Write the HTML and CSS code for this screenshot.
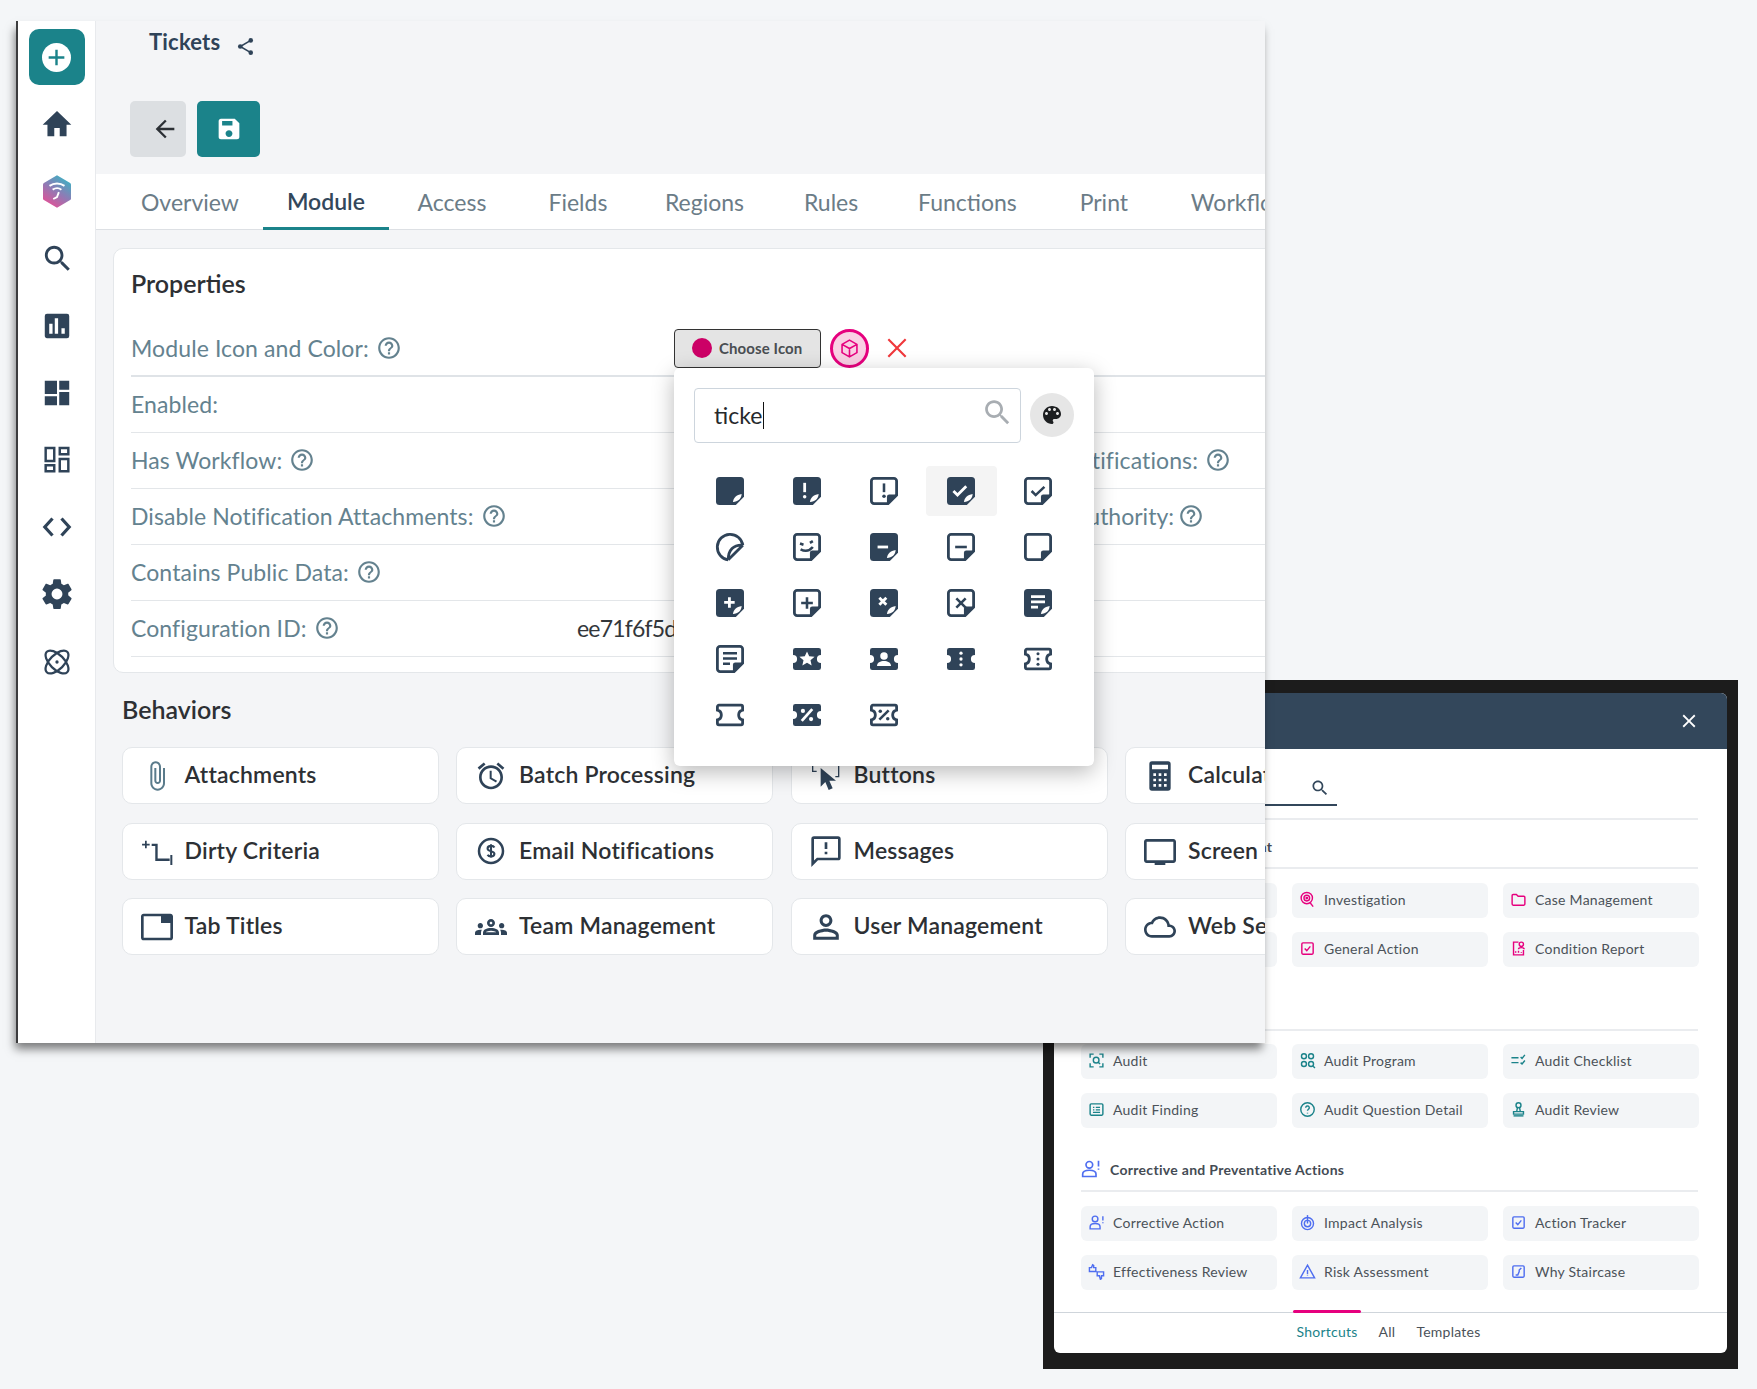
FILE: index.html
```html
<!DOCTYPE html>
<html lang="en">
<head>
    <meta charset="UTF-8">
    <meta name="viewport" content="width=device-width, initial-scale=1.0">
    <title>Tickets</title>
    <link rel="stylesheet" href="styles.css">
</head>
<body>
    <svg class="sprite" width="0" height="0">
        <defs>
            <linearGradient id="hexGrad" x1="0.8" y1="0" x2="0.2" y2="1">
                <stop offset="0" stop-color="#35b6c4"/>
                <stop offset="0.5" stop-color="#8f7bb5"/>
                <stop offset="1" stop-color="#ea4d94"/>
            </linearGradient>

            <symbol id="help" viewBox="0 0 24 24"><path d="M11 18h2v-2h-2v2zm1-16C6.48 2 2 6.48 2 12s4.48 10 10 10 10-4.48 10-10S17.52 2 12 2zm0 18c-4.41 0-8-3.59-8-8s3.59-8 8-8 8 3.59 8 8-3.59 8-8 8zm0-14c-2.21 0-4 1.79-4 4h2c0-1.1.9-2 2-2s2 .9 2 2c0 2-3 1.75-3 5h2c0-2.25 3-2.5 3-5 0-2.21-1.79-4-4-4z"/></symbol>

            <!-- sticky notes and tickets for the picker -->
            <symbol id="nf" viewBox="0 0 24 24"><path d="M3 0h18a3 3 0 0 1 3 3v14l-7 7H3a3 3 0 0 1-3-3V3a3 3 0 0 1 3-3z"/><path class="w" d="M14.500 21.500c.3-3.600 3-6.300 7.500-7-.3 4-3 6.600-7.500 7z"/></symbol>
            <symbol id="nl" viewBox="0 0 24 24"><path class="ln" d="M3.500 1.200h17a2.300 2.300 0 0 1 2.300 2.300v12l-7.300 7.300h-12a2.300 2.300 0 0 1-2.300-2.300v-17a2.300 2.300 0 0 1 2.300-2.300z"/><path d="M14.500 23.500V17a2 2 0 0 1 2-2h7z"/></symbol>
            <symbol id="tf" viewBox="0 0 24 24"><path d="M2 2.500h20a2 2 0 0 1 2 2v4a3.500 3.500 0 0 0 0 7v4a2 2 0 0 1-2 2H2a2 2 0 0 1-2-2v-4a3.500 3.500 0 0 0 0-7v-4a2 2 0 0 1 2-2z"/></symbol>
            <symbol id="tl" viewBox="0 0 24 24"><path class="ln" d="M2.500 3.600h19a1.300 1.300 0 0 1 1.300 1.300v2.900a4.300 4.300 0 0 0 0 8.400v2.900a1.300 1.300 0 0 1-1.300 1.300h-19a1.300 1.300 0 0 1-1.300-1.300v-2.900a4.300 4.300 0 0 0 0-8.400V4.900a1.300 1.300 0 0 1 1.300-1.300z"/></symbol>
        </defs>
    </svg>

    <!-- window behind -->
    <section class="back-window">
        <div class="panel">
            <div class="panel-head">
                <svg class="panel-close" viewBox="0 0 24 24"><path d="M19 6.410L17.590 5 12 10.590 6.410 5 5 6.410 10.590 12 5 17.590 6.410 19 12 13.410 17.590 19 19 17.590 13.410 12z"/></svg>
            </div>
            <div class="panel-body">
                <div class="panel-search">
                    <svg viewBox="0 0 24 24"><path d="M15.500 14h-.790l-.280-.270C15.410 12.590 16 11.110 16 9.500 16 5.910 13.090 3 9.500 3S3 5.910 3 9.500 5.910 16 9.500 16c1.610 0 3.090-.590 4.230-1.570l.270.280v.790l5 4.990L20.490 19l-4.990-5zm-6 0C7.010 14 5 11.990 5 9.500S7.010 5 9.500 5 14 7.010 14 9.500 11.990 14 9.500 14z"/></svg>
                </div>

                <div class="section-head first pink"><svg viewBox="0 0 24 24"><path d="M3 6.500a1.500 1.500 0 0 1 1.500-1.500H9l2.500 2.500h8A1.500 1.500 0 0 1 21 9v9.500a1.500 1.500 0 0 1-1.500 1.500h-15A1.500 1.500 0 0 1 3 18.500z"/></svg>Client Case Management</div>
                <div class="items pink">
                    <div class="item">Incident</div>
                    <div class="item"><svg viewBox="0 0 24 24"><circle cx="11" cy="10" r="8"/><circle cx="11" cy="10" r="4"/><circle cx="11" cy="10" r="1"/><path d="M16 17l4 5"/></svg>Investigation</div>
                    <div class="item"><svg viewBox="0 0 24 24"><path d="M3 6.500a1.500 1.500 0 0 1 1.500-1.500H9l2.500 2.500h8A1.500 1.500 0 0 1 21 9v9.500a1.500 1.500 0 0 1-1.500 1.500h-15A1.500 1.500 0 0 1 3 18.500z"/></svg>Case Management</div>
                    <div class="item">Hazard</div>
                    <div class="item"><svg viewBox="0 0 24 24"><rect x="4" y="4" width="16" height="16" rx="1.500"/><path d="M8 12l3 3 5-6"/></svg>General Action</div>
                    <div class="item"><svg viewBox="0 0 24 24"><path d="M12 3H5v18h14v-7"/><circle cx="16" cy="6" r="3"/><path d="M12 13c0-3 8-3 8 0M8 18v-2M12 18v-3M16 18v-1"/></svg>Condition Report</div>
                </div>

                <div class="section-head">Audit</div>
                <div class="items teal">
                    <div class="item"><svg viewBox="0 0 24 24"><path d="M8 3H3v5M16 3h5v5M8 21H3v-5M16 21h5v-5"/><circle cx="11.500" cy="11.500" r="4"/><path d="M14.500 14.500l2.500 2.500"/></svg>Audit</div>
                    <div class="item"><svg viewBox="0 0 24 24"><circle cx="7" cy="6" r="3.500"/><circle cx="17" cy="6" r="3.500"/><circle cx="7" cy="17" r="3.500"/><circle cx="17" cy="17" r="3.500"/><path d="M20 20l2.500 2.500"/></svg>Audit Program</div>
                    <div class="item"><svg viewBox="0 0 24 24"><path d="M2 8h10M2 15h10M15 7l2 2 4-5M15 15l2 2 4-5"/></svg>Audit Checklist</div>
                    <div class="item"><svg viewBox="0 0 24 24"><rect x="3" y="4" width="18" height="16" rx="1.500"/><path d="M7 9h2M11 9h6M7 12.500h2M11 12.500h6M7 16h10"/></svg>Audit Finding</div>
                    <div class="item"><svg viewBox="0 0 24 24"><circle cx="12" cy="12" r="9.500"/><path d="M9.500 9.500a2.500 2.500 0 1 1 3.800 2.100c-.9.600-1.300 1.100-1.300 2.200M12 16.500v1"/></svg>Audit Question Detail</div>
                    <div class="item"><svg viewBox="0 0 24 24"><circle cx="12" cy="6" r="3.500"/><path d="M10.500 9.500l-1 5M13.500 9.500l1 5M5 15h14v3.500H5z"/><path class="solid" d="M5 20h14v2H5z"/></svg>Audit Review</div>
                </div>

                <div class="section-head"><svg viewBox="0 0 24 24"><circle cx="10" cy="7" r="4"/><path d="M2 21v-3c0-3 4-4.500 8-4.500s8 1.500 8 4.500v3z"/><path d="M21 2v7M21 11.500v1.500"/></svg>Corrective and Preventative Actions</div>
                <div class="items blue">
                    <div class="item"><svg viewBox="0 0 24 24"><circle cx="10" cy="7" r="4"/><path d="M3 21v-3c0-3 3.500-4.500 7-4.500s7 1.500 7 4.500v3z"/><path d="M21 3v6M21 11.500V13"/></svg>Corrective Action</div>
                    <div class="item"><svg viewBox="0 0 24 24"><circle cx="12" cy="13.500" r="8.500"/><circle cx="12" cy="13.500" r="4.500"/><path d="M12 1.500v12"/></svg>Impact Analysis</div>
                    <div class="item"><svg viewBox="0 0 24 24"><rect x="4" y="4" width="16" height="16" rx="1.500"/><path d="M8 12l3 3 5-6"/></svg>Action Tracker</div>
                    <div class="item"><svg viewBox="0 0 24 24"><path d="M2 6.500h3L6.500 2.500l1.500 1v3h3v5.500H2zM13 12.500h9v5.500h-3v4l-1.500 1L16 18h-3z"/></svg>Effectiveness Review</div>
                    <div class="item"><svg viewBox="0 0 24 24"><path d="M12 3l10 18H2zM12 10v6M12 17.500v1"/></svg>Risk Assessment</div>
                    <div class="item"><svg viewBox="0 0 24 24"><rect x="4" y="4" width="16" height="16" rx="1.500"/><path d="M8 17h3l2-5v-2l3-3"/></svg>Why Staircase</div>
                </div>
            </div>
            <nav class="panel-tabs">
                <span class="panel-tab active">Shortcuts</span>
                <span class="panel-tab">All</span>
                <span class="panel-tab">Templates</span>
            </nav>
        </div>
    </section>

    <!-- window in front -->
    <section class="main-window">
        <aside class="sidebar">
            <button class="add-btn">
                <svg viewBox="0 0 24 24"><circle cx="12" cy="12" r="12" fill="#fff"/><path d="M12 5.500v13M5.500 12h13" stroke="#1b838a" stroke-width="2" fill="none"/></svg>
            </button>
            <svg class="side-icon" viewBox="1 1 22 22"><path d="M10 21v-6h4v6h5v-8.500h3.500L12 2.500 1.500 12.500H5V21z"/></svg>
            <svg class="side-icon logo" viewBox="0 0 24 26"><path fill="url(#hexGrad)" d="M12 0l10.500 6.200a1.500 1.500 0 0 1 .7 1.300v11a1.500 1.500 0 0 1-.7 1.300L12 26 1.500 19.800a1.500 1.500 0 0 1-.7-1.300v-11a1.500 1.500 0 0 1 .7-1.300z"/><path d="M6 8.500c3.500-2.500 8.500-2.500 12 0M8.500 11.500c2.300-1.500 5-1.500 7 0M13.500 13.500l-1.500 4-3 1.500" fill="none" stroke="#fff" stroke-width="1.500"/></svg>
            <svg class="side-icon" viewBox="1 1 21 21"><path d="M15.500 14h-.790l-.280-.270C15.410 12.590 16 11.110 16 9.500 16 5.910 13.090 3 9.500 3S3 5.910 3 9.500 5.910 16 9.500 16c1.610 0 3.090-.590 4.230-1.570l.270.280v.790l5 4.990L20.490 19l-4.990-5zm-6 0C7.010 14 5 11.990 5 9.500S7.010 5 9.500 5 14 7.010 14 9.500 11.990 14 9.500 14z"/></svg>
            <svg class="side-icon" viewBox="-1.500 -1.500 27 27"><path d="M21 1H3a2 2 0 0 0-2 2v18c0 1.100.9 2 2 2h18a2 2 0 0 0 2-2V3a2 2 0 0 0-2-2zM8 19H5v-9h3v9zm5 0h-3V5h3v14zm6 0h-3v-5h3v5z"/></svg>
            <svg class="side-icon" viewBox="-1.500 -1.500 27 27"><path d="M1 13h11V1H1v12zm0 10h11v-8H1v8zm13 0h9V11h-9v12zM14 1v8h9V1h-9z"/></svg>
            <svg class="side-icon" viewBox="0.500 0 24.500 24.500"><path d="M21 3.500v3h-5v-3h5M9.500 3.500v8.500h-5V3.500h5M21 12.500v8h-5v-8h5M9.500 17.500v3h-5v-3h5M23 1.500h-9v7h9v-7zM11.500 1.500h-9V14h9V1.500zM23 10.500h-9v12h9v-12zM11.500 15.500h-9v7h9v-7z"/></svg>
            <svg class="side-icon" viewBox="0 0 30 30"><path d="M10.500 6.500L2.800 15l7.700 8.500M19.500 6.500L27.200 15l-7.700 8.500" fill="none" stroke="currentColor" stroke-width="3.200"/></svg>
            <svg class="side-icon" viewBox="1 1 22 22"><path d="M20.200 13c.040-.330.070-.660.070-1s-.030-.670-.080-1l2.320-1.800c.200-.160.260-.450.130-.680l-2.200-3.800c-.130-.240-.420-.320-.670-.240l-2.730 1.100c-.570-.430-1.180-.800-1.850-1.080l-.410-2.900c-.050-.270-.270-.470-.550-.470H9.840c-.270 0-.490.200-.540.470l-.410 2.900c-.670.280-1.290.650-1.850 1.080l-2.730-1.100c-.250-.090-.540 0-.670.240L1.440 8.520c-.140.240-.090.530.130.680L3.890 11c-.050.340-.100.720-.100 1.070s.020.730.080 1.070l-2.320 1.800c-.200.160-.260.450-.130.680l2.200 3.800c.130.240.420.320.670.240l2.730-1.100c.570.430 1.180.800 1.850 1.080l.410 2.900c.060.270.270.470.550.470h4.390c.270 0 .500-.200.540-.470l.410-2.900c.670-.280 1.290-.640 1.850-1.080l2.730 1.100c.250.090.540 0 .670-.240l2.200-3.800c.130-.240.080-.530-.130-.680zM12 16a4 4 0 1 1 0-8 4 4 0 0 1 0 8z"/></svg>
            <svg class="side-icon" viewBox="-1.500 -1.500 27 27"><g fill="none" stroke="currentColor" stroke-width="2"><ellipse cx="12" cy="12" rx="13" ry="6.500" transform="rotate(45 12 12)"/><ellipse cx="12" cy="12" rx="13" ry="6.500" transform="rotate(-45 12 12)"/></g><circle cx="12" cy="12" r="1.500"/></svg>
        </aside>

        <main class="content">
            <div class="page-title">
                <h1>Tickets</h1>
                <svg viewBox="0 0 24 24"><g fill="none" stroke="currentColor" stroke-width="1.800"><path d="M18 5L6 12l12 7"/></g><circle cx="18" cy="5" r="2.600"/><circle cx="6" cy="12" r="2.600"/><circle cx="18" cy="19" r="2.600"/></svg>
            </div>

            <div class="toolbar">
                <button class="btn-back"><svg viewBox="0 0 24 24"><path d="M20 11H7.830l5.590-5.590L12 4l-8 8 8 8 1.410-1.410L7.830 13H20v-2z"/></svg></button>
                <button class="btn-save"><svg viewBox="0 0 24 24"><path d="M17 3H5c-1.110 0-2 .9-2 2v14c0 1.100.89 2 2 2h14c1.100 0 2-.9 2-2V7l-4-4zm-5 16c-1.660 0-3-1.340-3-3s1.340-3 3-3 3 1.340 3 3-1.340 3-3 3zm3-10H6V5h9v4z" transform="translate(12 12) scale(.92) translate(-12 -12)"/></svg></button>
            </div>

            <nav class="tabs">
                <a class="tab">Overview</a>
                <a class="tab active">Module</a>
                <a class="tab">Access</a>
                <a class="tab">Fields</a>
                <a class="tab">Regions</a>
                <a class="tab">Rules</a>
                <a class="tab">Functions</a>
                <a class="tab">Print</a>
                <a class="tab">Workflow</a>
            </nav>

            <div class="card">
                <h2 class="card-title">Properties</h2>

                <div class="row strong">
                    <div class="label">Module Icon and Color: <svg class="help"><use href="#help"/></svg></div>
                    <div class="value">
                        <div class="picker">
                            <button class="choose-btn"><span class="dot"></span>Choose Icon</button>
                            <span class="preview"><svg viewBox="0 0 24 24"><path d="M12 2.500l8.500 4.800v9.400L12 21.500l-8.500-4.800V7.300zM3.500 7.300L12 12l8.500-4.700M12 12v9.500"/></svg></span>
                            <svg class="clear" viewBox="0 0 24 24"><path d="M4 4l16 16M20 4L4 20"/></svg>

                            <div class="popup">
                                <div class="popup-top">
                                    <div class="search-box">
                                        <span class="search-text">ticke</span>
                                        <svg viewBox="0 0 24 24"><path d="M15.500 14h-.790l-.280-.270C15.410 12.590 16 11.110 16 9.500 16 5.910 13.090 3 9.500 3S3 5.910 3 9.500 5.910 16 9.500 16c1.610 0 3.090-.590 4.230-1.570l.270.280v.790l5 4.990L20.490 19l-4.990-5zm-6 0C7.010 14 5 11.990 5 9.500S7.010 5 9.500 5 14 7.010 14 9.500 11.990 14 9.500 14z"/></svg>
                                    </div>
                                    <span class="palette"><svg viewBox="0 0 24 24"><path d="M12 3c-4.970 0-9 4.030-9 9s4.030 9 9 9c.83 0 1.500-.67 1.500-1.500 0-.39-.15-.74-.39-1.010-.23-.26-.38-.61-.38-.99 0-.83.67-1.500 1.500-1.500H16c2.760 0 5-2.240 5-5 0-4.420-4.030-8-9-8zm-5.500 9c-.83 0-1.500-.67-1.500-1.500S5.670 9 6.500 9 8 9.670 8 10.500 7.330 12 6.500 12zm3-4C8.670 8 8 7.330 8 6.500S8.670 5 9.500 5s1.500.67 1.500 1.500S10.330 8 9.500 8zm5 0c-.83 0-1.500-.67-1.500-1.500S13.670 5 14.500 5s1.500.67 1.500 1.500S15.330 8 14.500 8zm3 4c-.83 0-1.500-.67-1.500-1.500S16.670 9 17.500 9s1.500.67 1.500 1.500-.67 1.500-1.500 1.500z"/></svg></span>
                                </div>
                                <div class="icon-grid">
                                    <span class="cell"><svg viewBox="0 0 24 24"><use href="#nf"/></svg></span>
                                    <span class="cell"><svg viewBox="0 0 24 24"><use href="#nf"/><path class="w-s" d="M10 5v8"/><circle class="w" cx="10" cy="17" r="1.500"/></svg></span>
                                    <span class="cell"><svg viewBox="0 0 24 24"><use href="#nl"/><path class="d-s" d="M12 5.500v7.500"/><circle cx="12" cy="16.500" r="1.500"/></svg></span>
                                    <span class="cell picked"><svg viewBox="0 0 24 24"><use href="#nf"/><path class="w-s" d="M5.500 12l3.500 3.500 7.500-7.500"/></svg></span>
                                    <span class="cell"><svg viewBox="0 0 24 24"><use href="#nl"/><path class="d-s" d="M6.500 12l3.500 3.500 7.500-7"/></svg></span>

                                    <span class="cell"><svg viewBox="0 0 24 24"><path class="ln" d="M23 10.500A11 11 0 1 0 10.500 23"/><path class="ln" d="M23 10.500c-8-.5-12.500 4-12.500 12.500M23 10.500L10.500 23"/></svg></span>
                                    <span class="cell"><svg viewBox="0 0 24 24"><use href="#nl"/><path class="d-s" d="M6 9l3 1M17 7l-2.500 1.500M6.500 14c4 2 8 1 10.500-2"/></svg></span>
                                    <span class="cell"><svg viewBox="0 0 24 24"><use href="#nf"/><path class="w-s" d="M6.500 12h9"/></svg></span>
                                    <span class="cell"><svg viewBox="0 0 24 24"><use href="#nl"/><path class="d-s" d="M7 12h10"/></svg></span>
                                    <span class="cell"><svg viewBox="0 0 24 24"><use href="#nl"/></svg></span>

                                    <span class="cell"><svg viewBox="0 0 24 24"><use href="#nf"/><path class="w-s" d="M7 11.500h9M11.500 7v9"/></svg></span>
                                    <span class="cell"><svg viewBox="0 0 24 24"><use href="#nl"/><path class="d-s" d="M7 12h10M12 7v10"/></svg></span>
                                    <span class="cell"><svg viewBox="0 0 24 24"><use href="#nf"/><path class="w-s" d="M8 7.500l6 6M14 7.500l-6 6"/></svg></span>
                                    <span class="cell"><svg viewBox="0 0 24 24"><use href="#nl"/><path class="d-s" d="M8 8l8 8M16 8l-8 8"/></svg></span>
                                    <span class="cell"><svg viewBox="0 0 24 24"><use href="#nf"/><path class="w-s" d="M6 6.500h12M6 11h12M6 15.500h6"/></svg></span>

                                    <span class="cell"><svg viewBox="0 0 24 24"><use href="#nl"/><path class="d-s" d="M6 7h12M6 11.500h12M6 16h6"/></svg></span>
                                    <span class="cell"><svg viewBox="0 0 24 24"><use href="#tf"/><path class="w" d="M12 5.500l1.900 4.200 4.600.4-3.500 3 1 4.500-4-2.400-4 2.400 1-4.500-3.500-3 4.600-.4z"/></svg></span>
                                    <span class="cell"><svg viewBox="0 0 24 24"><use href="#tf"/><circle class="w" cx="12" cy="9.500" r="3.200"/><path class="w" d="M6 18c0-3 3-4.200 6-4.200s6 1.200 6 4.200z"/></svg></span>
                                    <span class="cell"><svg viewBox="0 0 24 24"><use href="#tf"/><circle class="w" cx="12" cy="7" r="1.400"/><circle class="w" cx="12" cy="12" r="1.400"/><circle class="w" cx="12" cy="17" r="1.400"/></svg></span>
                                    <span class="cell"><svg viewBox="0 0 24 24"><use href="#tl"/><circle cx="12" cy="7.500" r="1.300"/><circle cx="12" cy="12" r="1.300"/><circle cx="12" cy="16.500" r="1.300"/></svg></span>

                                    <span class="cell"><svg viewBox="0 0 24 24"><use href="#tl"/></svg></span>
                                    <span class="cell"><svg viewBox="0 0 24 24"><use href="#tf"/><path class="w-s" d="M7.500 17L16.500 7"/><circle class="w" cx="8.500" cy="8.500" r="1.800"/><circle class="w" cx="15.500" cy="15.500" r="1.800"/></svg></span>
                                    <span class="cell"><svg viewBox="0 0 24 24"><use href="#tl"/><path class="d-s" d="M8 16l8-8"/><circle cx="8.800" cy="8.800" r="1.500"/><circle cx="15.200" cy="15.200" r="1.500"/></svg></span>
                                </div>
                            </div>
                        </div>
                    </div>
                </div>
                <div class="row">
                    <div class="label">Enabled:</div>
                </div>
                <div class="row">
                    <div class="label">Has Workflow: <svg class="help"><use href="#help"/></svg></div>
                    <div class="side-label">Has Notifications: <svg class="help"><use href="#help"/></svg></div>
                </div>
                <div class="row">
                    <div class="label">Disable Notification Attachments: <svg class="help"><use href="#help"/></svg></div>
                    <div class="side-label short">Has Authority: <svg class="help"><use href="#help"/></svg></div>
                </div>
                <div class="row">
                    <div class="label">Contains Public Data: <svg class="help"><use href="#help"/></svg></div>
                </div>
                <div class="row">
                    <div class="label">Configuration ID: <svg class="help"><use href="#help"/></svg></div>
                    <div class="value id">ee71f6f5d</div>
                </div>
            </div>

            <h2 class="behaviors-title">Behaviors</h2>
            <div class="behaviors">
                <a class="behavior"><svg class="soft" viewBox="0 0 24 24"><path d="M16.500 6v11.500c0 2.210-1.790 4-4 4s-4-1.790-4-4V5c0-1.380 1.120-2.500 2.500-2.500s2.500 1.120 2.500 2.500v10.500c0 .55-.45 1-1 1s-1-.45-1-1V6H10v9.500c0 1.380 1.120 2.500 2.500 2.500s2.500-1.120 2.500-2.500V5c0-2.210-1.790-4-4-4S7 2.790 7 5v12.500c0 3.040 2.460 5.500 5.500 5.500s5.500-2.460 5.500-5.500V6h-1.500z"/></svg>Attachments</a>
                <a class="behavior"><svg viewBox="0 0 24 24"><path d="M22 5.720l-4.600-3.860-1.290 1.530 4.600 3.860L22 5.720zM7.880 3.390L6.600 1.860 2 5.710l1.290 1.530 4.590-3.850zM12.500 8H11v6l4.750 2.850.75-1.230-4-2.370V8zM12 4c-4.970 0-9 4.030-9 9s4.020 9 9 9c4.970 0 9-4.030 9-9s-4.030-9-9-9zm0 16c-3.870 0-7-3.130-7-7s3.130-7 7-7 7 3.130 7 7-3.130 7-7 7z"/></svg>Batch Processing</a>
                <a class="behavior"><svg viewBox="0 0 24 24"><path d="M8 6v14l3.500-3.500 2.500 6 3-1.300-2.500-5.700h5z"/><path d="M1.500 4h1v4h2.500v1H1.500zM21 4h1v9h-3v-1h2z"/></svg>Buttons</a>
                <a class="behavior"><svg viewBox="0 0 24 24"><path fill-rule="evenodd" d="M6 1h12a2 2 0 0 1 2 2v18a2 2 0 0 1-2 2H6a2 2 0 0 1-2-2V3a2 2 0 0 1 2-2zm0 2.500V7h12V3.500zM7 10v2h2v-2zm4 0v2h2v-2zm4 0v2h2v-2zM7 14v2h2v-2zm4 0v2h2v-2zm4 0v2h2v-2zM7 18v2h2v-2zm4 0v2h2v-2zm4 0v2h2v-2z"/></svg>Calculations</a>

                <a class="behavior"><svg viewBox="0 0 24 24"><path d="M6.500 6.500H4.300V4.300H3v2.200H.8v1.300H3V10h1.300V7.800h2.200zM8 6.500h4.500v11.200h9V19.500H10.700V8.300H8zM22 15h1.500v7.500H22z"/></svg>Dirty Criteria</a>
                <a class="behavior"><svg viewBox="-2 -2 28 28"><circle cx="12" cy="12" r="10.500" fill="none" stroke="currentColor" stroke-width="2.200"/><path d="M15 9c-.5-1-1.500-1.500-3-1.500-1.700 0-3 .9-3 2.300 0 3.200 6 1.600 6 4.700 0 1.400-1.300 2.300-3 2.300-1.500 0-2.500-.5-3-1.500M12 6v12" fill="none" stroke="currentColor" stroke-width="1.800"/></svg>Email Notifications</a>
                <a class="behavior"><svg viewBox="0 0 24 24"><path d="M21 1H3a2 2 0 0 0-2 2v21l5-5h15a2 2 0 0 0 2-2V3a2 2 0 0 0-2-2zm0 16H5.200L3 19.200V3h18v14z"/><path d="M11 12.500h2v2h-2zm0-7h2v5h-2z"/></svg>Messages</a>
                <a class="behavior"><svg viewBox="0 0 24 24"><path d="M22 3H2C.9 3 0 3.900 0 5v14c0 1.100.9 2 2 2h6v1.500h8V21h6c1.100 0 2-.9 2-2V5c0-1.100-.9-2-2-2zm0 16H2V5h20v14z"/></svg>Screen Rules</a>

                <a class="behavior"><svg viewBox="0 0 24 24"><path d="M22 2H2C.9 2 0 2.900 0 4v16c0 1.100.9 2 2 2h20c1.100 0 2-.9 2-2V4c0-1.100-.9-2-2-2zm0 18H2V4h13v5h7v11z"/></svg>Tab Titles</a>
                <a class="behavior"><svg viewBox="0 0 24 24"><path d="M4 13c1.100 0 2-.9 2-2 0-1.100-.9-2-2-2s-2 .9-2 2c0 1.100.9 2 2 2zm1.130 1.100c-.37-.060-.74-.1-1.130-.1-.99 0-1.930.21-2.780.58C.48 14.900 0 15.620 0 16.430V18h4.500v-1.610c0-.83.23-1.610.63-2.290zM20 13c1.100 0 2-.9 2-2 0-1.100-.9-2-2-2s-2 .9-2 2c0 1.100.9 2 2 2zm4 3.430c0-.81-.48-1.530-1.220-1.850-.85-.37-1.790-.58-2.780-.58-.39 0-.76.040-1.130.1.4.68.63 1.460.63 2.290V18H24v-1.570zm-7.760-2.780c-1.170-.52-2.610-.9-4.240-.9s-3.070.39-4.240.9C6.680 14.130 6 15.210 6 16.390V18h12v-1.610c0-1.180-.68-2.260-1.760-2.740zM8.070 16c.090-.23.13-.39.91-.69.97-.38 1.990-.56 3.020-.56s2.050.18 3.020.56c.77.3.81.46.91.69H8.070zM12 8c.55 0 1 .45 1 1s-.45 1-1 1-1-.45-1-1 .45-1 1-1m0-2c-1.660 0-3 1.340-3 3s1.340 3 3 3 3-1.340 3-3-1.340-3-3-3z"/></svg>Team Management</a>
                <a class="behavior"><svg viewBox="2 2 20 20"><path d="M12 5.900c1.160 0 2.100.94 2.100 2.100s-.94 2.100-2.100 2.100S9.900 9.160 9.900 8s.94-2.100 2.100-2.100m0 9c2.970 0 6.100 1.460 6.100 2.100v1.100H5.900V17c0-.64 3.130-2.100 6.100-2.100M12 4C9.790 4 8 5.790 8 8s1.790 4 4 4 4-1.790 4-4-1.790-4-4-4zm0 9c-2.670 0-8 1.340-8 4v3h16v-3c0-2.660-5.330-4-8-4z"/></svg>User Management</a>
                <a class="behavior"><svg viewBox="0 0 24 24"><path d="M19.350 10.040C18.670 6.590 15.640 4 12 4 9.110 4 6.600 5.640 5.350 8.040 2.340 8.360 0 10.910 0 14c0 3.310 2.690 6 6 6h13c2.760 0 5-2.240 5-5 0-2.640-2.050-4.780-4.650-4.960zM19 18H6c-2.210 0-4-1.790-4-4s1.790-4 4-4h.71C7.370 7.690 9.480 6 12 6c3.040 0 5.500 2.460 5.500 5.500v.5H19c1.660 0 3 1.340 3 3s-1.340 3-3 3z"/></svg>Web Services</a>
            </div>
        </main>
    </section>
</body>
</html>
```
FILE: styles.css
```css
* {
    box-sizing: border-box;
}

body {
    margin: 0;
    width: 1757px;
    height: 1389px;
    position: relative;
    overflow: hidden;
    background: #f4f6f8;
    font-family: Lato, "Noto Sans", sans-serif;
    color: #2d3034;
}

h1, h2 {
    margin: 0;
    font-weight: 600;
}

button {
    border: none;
    padding: 0;
    font-family: inherit;
}

svg {
    display: block;
    flex: none;
    fill: currentColor;
}

.sprite {
    position: absolute;
}

/* shared bits of the sprite */
.w { fill: #fff; }
.ln { fill: none; stroke: currentColor; stroke-width: 2.4; }
.w-s { fill: none; stroke: #fff; stroke-width: 2.4; }
.d-s { fill: none; stroke: currentColor; stroke-width: 2.2; }

/* back window */
.back-window {
    position: absolute;
    left: 1043px;
    top: 680px;
    width: 695px;
    height: 689px;
    padding: 13px 11px 16px;
    background: #1c1c1c;
}

.panel {
    height: 100%;
    display: flex;
    flex-direction: column;
    background: #fff;
    border-radius: 6px;
    overflow: hidden;
}

.panel-head {
    height: 56px;
    flex: none;
    display: flex;
    align-items: center;
    justify-content: flex-end;
    padding-right: 27px;
    background: #33475b;
    color: #fff;
}

.panel-close {
    width: 22px;
    height: 22px;
}

.panel-body {
    flex: 1;
    padding: 0 29px 0 27px;
}

.panel-search {
    height: 71px;
    border-bottom: 2px solid #eaecef;
}

.panel-search svg {
    position: absolute;
    left: 267px;
    top: 98px;
    width: 20px;
    height: 20px;
    color: #33475b;
}

.panel-search::before {
    content: "";
    display: block;
    height: 55px;
    width: 256px;
    border-bottom: 2px solid #33475b;
}

.section-head {
    height: 64px;
    display: flex;
    align-items: flex-end;
    gap: 9px;
    padding-bottom: 11px;
    border-bottom: 2px solid #eaecef;
    font-size: 14px;
    line-height: 18px;
    font-weight: 700;
    letter-spacing: 0.3px;
    color: #444b54;
}

.section-head.first {
    height: 49px;
}

.section-head svg {
    width: 20px;
    height: 20px;
    fill: none;
    stroke: #4f6ef0;
    stroke-width: 2;
}

.items {
    display: grid;
    grid-template-columns: repeat(3, 196px);
    column-gap: 15px;
    row-gap: 14px;
    margin-top: 13.5px;
}

.item {
    height: 35px;
    display: flex;
    align-items: center;
    gap: 8px;
    padding: 0 0 2px 7px;
    border-radius: 6px;
    background: #f3f5f7;
    font-size: 14px;
    letter-spacing: 0.25px;
    color: #4b5259;
}

.item svg {
    width: 17px;
    height: 17px;
    fill: none;
    stroke-width: 2;
}

.item svg .solid {
    fill: currentColor;
    stroke: none;
}

.pink svg { color: #e6007e; stroke: #e6007e; }
.teal svg { color: #1b838a; stroke: #1b838a; }
.blue svg { color: #4f6ef0; stroke: #4f6ef0; }

.panel-tabs {
    height: 41px;
    flex: none;
    display: flex;
    align-items: center;
    justify-content: center;
    gap: 21px;
    padding: 0 4px 4px 0;
    border-top: 1px solid #cfd5db;
    font-size: 14px;
    letter-spacing: 0.25px;
    color: #4b5259;
}

.panel-tab.active {
    position: relative;
    color: #1b838a;
}

.panel-tab.active::before {
    content: "";
    position: absolute;
    left: -3px;
    right: -3px;
    top: -13px;
    height: 3px;
    border-radius: 2px;
    background: #e6007e;
}

/* front window */
.main-window {
    position: absolute;
    left: 16px;
    top: 21px;
    width: 1249px;
    height: 1022px;
    display: flex;
    overflow: hidden;
    border-left: 2px solid #3c3c3e;
    background: #f4f5f7;
    box-shadow: -2px 7px 9px -1px rgba(0, 0, 0, 0.5);
}

.sidebar {
    width: 78px;
    flex: none;
    display: flex;
    flex-direction: column;
    align-items: center;
    padding-top: 8px;
    background: #fff;
    border-right: 1px solid #e8eaed;
    color: #2f4358;
}

.add-btn {
    width: 56px;
    height: 56px;
    flex: none;
    display: flex;
    align-items: center;
    justify-content: center;
    margin-bottom: 24px;
    border-radius: 10px;
    background: #1b838a;
}

.add-btn svg {
    width: 29px;
    height: 29px;
}

.side-icon {
    width: 30px;
    height: 30px;
    margin-bottom: 37.2px;
}

.side-icon.logo {
    height: 33px;
    margin-top: -1.5px;
    margin-bottom: 35.7px;
}

.content {
    flex: 1;
    min-width: 0;
    position: relative;
}

.page-title {
    height: 40px;
    display: flex;
    align-items: center;
    gap: 15px;
    padding-left: 53px;
    color: #2f4358;
}

.page-title h1 {
    font-size: 22px;
    font-weight: 700;
    letter-spacing: 0.2px;
}

.page-title svg {
    width: 21px;
    height: 21px;
    margin-top: 10px;
}

.toolbar {
    display: flex;
    gap: 11px;
    margin: 40px 0 17px;
    padding-left: 34px;
}

.toolbar button {
    height: 56px;
    display: flex;
    align-items: center;
    justify-content: center;
    border-radius: 5px;
}

.btn-back {
    width: 56px;
    padding-left: 14px !important;
    background: #dcdfe2;
    color: #2c3035;
}

.btn-back svg {
    width: 28px;
    height: 28px;
}

.btn-save {
    width: 63px;
    background: #1b838a;
    color: #fff;
}

.btn-save svg {
    width: 30px;
    height: 30px;
}

.tabs {
    height: 56px;
    display: flex;
    padding-left: 21px;
    background: #fff;
    border-bottom: 1px solid #dde0e4;
    white-space: nowrap;
}

.tab {
    flex: none;
    min-width: 126px;
    display: flex;
    align-items: center;
    justify-content: center;
    padding: 0 24px;
    font-size: 23px;
    color: #6b7c87;
}

.tab.active {
    height: 56px;
    font-weight: 600;
    color: #33475b;
    border-bottom: 3px solid #1b838a;
}

.card {
    margin: 18px 0 0 17px;
    width: 1300px;
    padding: 0 0 15px 17px;
    background: #fff;
    border: 1px solid #e4e7ea;
    border-radius: 10px;
}

.card-title {
    height: 72px;
    display: flex;
    align-items: center;
    padding-bottom: 5px;
    font-size: 25px;
    color: #2d3034;
}

.row {
    height: 56px;
    display: flex;
    align-items: center;
    border-bottom: 1px solid #e3e6e9;
}

.row.strong {
    border-bottom: 2px solid #dfe3e7;
}

.label {
    width: 446px;
    flex: none;
    display: flex;
    align-items: center;
    gap: 7px;
    padding-bottom: 1px;
    font-size: 23px;
    letter-spacing: 0.1px;
    color: #64828f;
}

.help {
    width: 26px;
    height: 26px;
}

.value {
    font-size: 23px;
    color: #33373b;
}

.value.id {
    padding-bottom: 1px;
    letter-spacing: -0.8px;
}

.picker {
    position: relative;
    display: flex;
    align-items: center;
    margin-left: 97px;
}

.choose-btn {
    width: 147px;
    height: 39px;
    display: flex;
    align-items: center;
    gap: 7px;
    padding: 0 0 1px 17px;
    border: 1px solid #333;
    border-radius: 4px;
    background: #e4e4e4;
    font-size: 15px;
    font-weight: 700;
    letter-spacing: 0.1px;
    color: #4a4e52;
}

.dot {
    width: 20px;
    height: 20px;
    border-radius: 50%;
    background: #cc0066;
}

.preview {
    width: 39px;
    height: 39px;
    display: flex;
    align-items: center;
    justify-content: center;
    margin-left: 9px;
    border: 3px solid #e6007e;
    border-radius: 50%;
    background: #f9d0e4;
}

.preview svg {
    width: 21px;
    height: 21px;
    fill: none;
    stroke: #e6007e;
    stroke-width: 1.8;
}

.clear {
    width: 26px;
    height: 26px;
    margin-left: 15px;
    fill: none;
    stroke: #f0383c;
    stroke-width: 2;
}

/* icon picker popup */
.popup {
    position: absolute;
    left: 0;
    top: 39px;
    z-index: 5;
    width: 420px;
    height: 398px;
    padding: 20px;
    border-radius: 6px;
    background: #fff;
    box-shadow: 0 6px 22px rgba(0, 0, 0, 0.28);
}

.popup-top {
    display: flex;
    align-items: center;
    gap: 9px;
}

.search-box {
    width: 327px;
    height: 55px;
    display: flex;
    align-items: center;
    justify-content: space-between;
    padding: 0 6px 0 19px;
    border: 1.500px solid #cdd5dd;
    border-radius: 4px;
}

.search-text {
    padding-right: 1px;
    border-right: 1px solid #111;
    font-size: 23px;
    line-height: 27px;
    color: #26292c;
}

.search-box svg {
    width: 33px;
    height: 33px;
    margin-top: -5px;
    color: #a8adb2;
}

.palette {
    width: 44px;
    height: 44px;
    display: flex;
    align-items: center;
    justify-content: center;
    border-radius: 50%;
    background: #e6e6e6;
    color: #1d1f21;
}

.palette svg {
    width: 24px;
    height: 24px;
}

.icon-grid {
    display: grid;
    grid-template-columns: repeat(5, 1fr);
    grid-auto-rows: 50px;
    gap: 6px;
    margin-top: 23px;
    color: #2f4358;
}

.cell {
    display: flex;
    align-items: center;
    justify-content: center;
    border-radius: 4px;
}

.cell.picked {
    background: #f4f4f4;
}

.cell svg {
    width: 28px;
    height: 28px;
    overflow: visible;
}

/* behaviors */
.behaviors-title {
    margin: 17px 0 17px 26px;
    height: 40px;
    display: flex;
    align-items: center;
    padding-bottom: 3px;
    font-size: 25px;
    color: #2d3034;
}

.behaviors {
    display: grid;
    grid-template-columns: repeat(4, 317px);
    grid-auto-rows: 57px;
    gap: 18.500px 17.500px;
    margin-left: 25.5px;
}

.behavior {
    display: flex;
    align-items: center;
    gap: 12px;
    padding: 0 0 3px 18px;
    background: #fff;
    border: 1px solid #e4e7ea;
    border-radius: 10px;
    font-size: 23px;
    font-weight: 600;
    letter-spacing: 0.2px;
    white-space: nowrap;
    color: #2d3034;
}

.behavior svg {
    width: 32px;
    height: 32px;
    margin-top: 3px;
    color: #2f4358;
}

.behavior svg.soft {
    color: #5a7b8b;
}

/* the half hidden labels of the right column */
.side-label {
    width: 654px;
    flex: none;
    display: flex;
    align-items: center;
    justify-content: flex-end;
    gap: 7px;
    padding-bottom: 1px;
    font-size: 23px;
    letter-spacing: 0.1px;
    color: #64828f;
}

.side-label.short {
    width: 627px;
    gap: 4px;
    letter-spacing: 0;
}
```
